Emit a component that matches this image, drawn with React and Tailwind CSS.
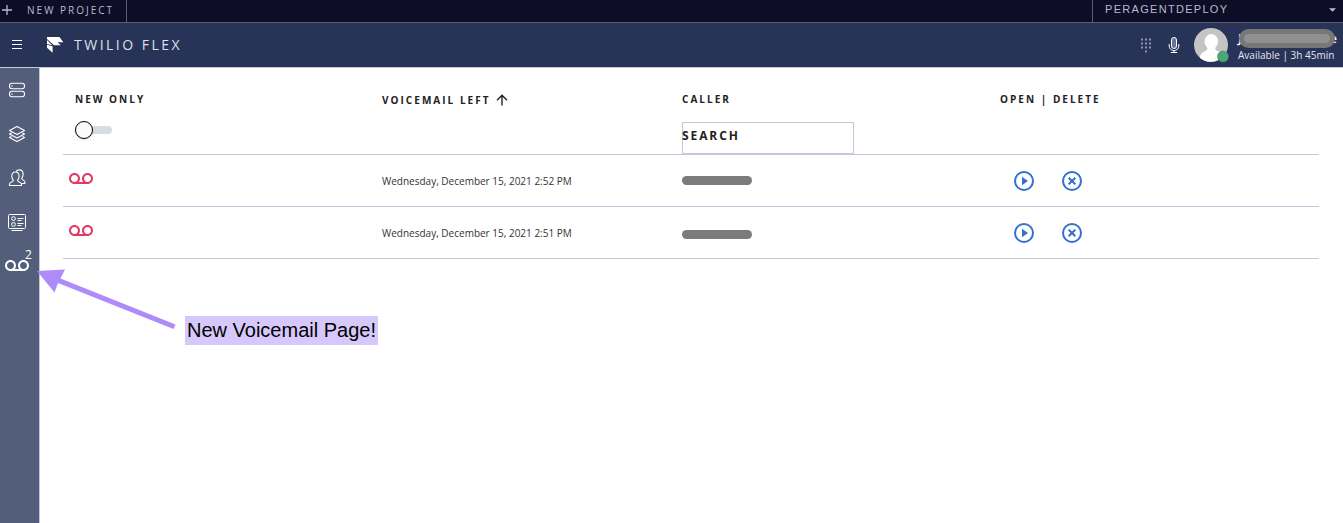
import React from "react";

const VOICEMAIL_PATH =
  "M18.5 6C15.46 6 13 8.46 13 11.5c0 1.33.47 2.55 1.26 3.5H9.74c.79-.95 1.26-2.17 1.26-3.5C11 8.46 8.54 6 5.5 6S0 8.46 0 11.5 2.46 17 5.5 17h13c3.04 0 5.5-2.46 5.5-5.5S21.54 6 18.5 6zm-13 9C3.57 15 2 13.43 2 11.5S3.57 8 5.5 8 9 9.57 9 11.5 7.43 15 5.5 15zm13 0c-1.93 0-3.5-1.57-3.5-3.5S16.57 8 18.5 8 22 9.57 22 11.5 20.43 15 18.5 15z";

function VoicemailIcon({ className }) {
  return (
    <svg viewBox="0 0 24 24" className={`block size-6 ${className}`} fill="currentColor">
      <path d={VOICEMAIL_PATH} />
    </svg>
  );
}

function ProjectBar() {
  return (
    <div className="flex h-[23px] shrink-0 border-b border-[#5e5f6c] bg-[#0e0d28] text-[#b9bac6]">
      <div className="flex w-[127px] items-center border-r border-[#5e5f6c]">
        <svg viewBox="0 0 14 22" className="h-[22px] w-[14px]" stroke="currentColor" strokeWidth="1.3">
          <path d="M2 10h10M7 5v10" />
        </svg>
        <span className="ml-[13px] whitespace-nowrap pb-[2px] text-[10px] leading-none tracking-[2.02px]">NEW PROJECT</span>
      </div>
      <div className="ml-auto flex w-[251px] items-center border-l border-[#5e5f6c] pl-3">
        <span className="pb-[3px] font-['Liberation_Sans',Arial,sans-serif] text-[11px] leading-none tracking-[1.3px]">PERAGENTDEPLOY</span>
        <svg viewBox="0 0 8 4" className="ml-auto mr-[7px] mb-[2px] h-1 w-[7px]" fill="currentColor">
          <path d="M0 0h8L4 4z" />
        </svg>
      </div>
    </div>
  );
}

function Header() {
  return (
    <header className="flex h-[45px] shrink-0 items-center border-b border-[#c6c5dc] bg-[#283358] text-white">
      <svg viewBox="0 0 10 10" className="ml-3 h-[10px] w-[10px]" stroke="currentColor" strokeWidth="1">
        <path d="M0 .5h10M0 4.5h10M0 8.5h10" />
      </svg>
      <svg viewBox="0 0 17 16" className="ml-[25px] h-4 w-[17px]" fill="currentColor">
        <path d="M0 0h12.500L16.300 5.200H10.500L13.800 8.300H7L0 1.900z" />
        <path d="M0 3l5.200 5.200L0 7zM0 7.800l5.600 1.400v6.600L0 10.800z" />
      </svg>
      <span className="ml-[10px] whitespace-nowrap text-[14px] leading-none tracking-[2.500px] text-[#dde0ea]">TWILIO FLEX</span>

      <div className="ml-auto flex items-center">
        <svg viewBox="0 0 12 16" className="mr-[16px] h-4 w-3" fill="#8e95ab">
          <path d="M1 1.400h2v2H1zM5 1.400h2v2H5zM9 1.400h2v2H9zM1 5.400h2v2H1zM5 5.400h2v2H5zM9 5.400h2v2H9zM1 9.400h2v2H1zM5 9.400h2v2H5zM9 9.400h2v2H9zM5 13.400h2v2H5z" />
        </svg>
        <svg viewBox="0 0 12 18" className="mr-[14px] h-[18px] w-3" fill="none" stroke="white">
          <rect x="3.500" y="1.500" width="5" height="11" rx="2.500" fill="#687391" />
          <path d="M1.200 8v2a4.800 4.600 0 0 0 9.600 0V8M6 14.600v2M2.800 16.500h6.400" />
        </svg>
        <svg viewBox="0 0 36 36" className="mr-2 h-9 w-9">
          <circle cx="17" cy="18" r="17" fill="#c4c4c4" />
          <ellipse cx="17.300" cy="14.600" rx="6.800" ry="7.600" fill="white" />
          <path d="M13.500 20h7.600c0 3 1 3.600 4 4.800 2.300 1 3.200 2.200 3.600 4.700A17 17 0 0 1 6 31c.2-3.600 1.200-5.200 3.700-6.200 2.800-1.200 3.800-1.800 3.800-4.800z" fill="white" />
          <circle cx="29" cy="29.500" r="5.500" fill="#4aa973" stroke="#3f7d75" strokeWidth="0.6" />
        </svg>
        <div className="w-[105px]">
          <div className="relative flex h-[19px] items-center justify-between pr-[6px] text-[13px] font-semibold leading-none">
            <span>J</span>
            <span>e</span>
            <div className="absolute left-px top-0 h-[19px] w-[96px] rounded-full border-[5px] border-[#777777] bg-[#909090]" />
          </div>
          <div className="mt-px whitespace-nowrap text-[10px] leading-[13px] tracking-[0.01px] text-[#e6e8ef]">Available | 3h 45min</div>
        </div>
      </div>
    </header>
  );
}

function Sidebar() {
  return (
    <nav className="flex w-10 shrink-0 flex-col border-r border-[#c6c5dc] bg-[#525e7a] pt-[10px] text-white">
      <div className="flex h-11 justify-center pr-[5px]">
        <svg viewBox="0 0 24 24" className="size-6" fill="none" stroke="currentColor" strokeWidth="1.1">
          <rect x="4.500" y="5.200" width="15" height="5.500" rx="2.500" />
          <rect x="4.500" y="13.200" width="15" height="5.500" rx="2.500" />
          <path d="M7 7.500v1.200M7 15.500v1.200" />
        </svg>
      </div>
      <div className="flex h-11 justify-center pr-[5px]">
        <svg viewBox="0 0 24 24" className="size-6" fill="none" stroke="currentColor" strokeWidth="1.1" strokeLinejoin="round">
          <path d="M12 4.500l7.500 4-7.500 4-7.500-4z" />
          <path d="M6.700 10.800l-2.200 1.200 7.500 4 7.500-4-2.200-1.200" />
          <path d="M6.700 14.400l-2.200 1.200 7.500 4 7.500-4-2.200-1.200" />
        </svg>
      </div>
      <div className="flex h-11 justify-center pr-[5px]">
        <svg viewBox="0 0 24 24" className="size-6" fill="none" stroke="currentColor" strokeWidth="1.1" strokeLinejoin="round">
          <path d="M4.500 19.500v-1.600c0-1.700 3.900-1.600 3.900-3.600-1-1-1.600-2.200-1.600-4C6.800 7.600 8.200 6 10.500 6s3.600 1.600 3.600 4.300c0 1.800-.6 3-1.600 4 0 2 4 1.900 4 3.600v1.600z" />
          <path d="M11 5.700c.6-1.200 1.800-1.800 3.400-1.800 2.500 0 3.700 1.700 3.700 4.400 0 1.700-.5 2.900-1.400 3.800 0 2 3.200 2 3.200 3.900v1.500h-3.300" />
        </svg>
      </div>
      <div className="flex h-11 justify-center pr-[5px]">
        <svg viewBox="0 0 24 24" className="size-6" fill="none" stroke="currentColor">
          <rect x="3.500" y="4.500" width="17" height="14" rx="1" />
          <circle cx="8.500" cy="8.600" r="1.900" />
          <circle cx="8.500" cy="14.400" r="1.900" />
          <path d="M12.500 8.500h6M12.500 10.500h4M12.500 13.500h6M12.500 15.500h4M6.500 20.500h11" />
        </svg>
      </div>
      <div className="relative pl-[5px]">
        <VoicemailIcon className="text-white" />
        <span className="absolute left-[25px] top-[-6px] text-[12px] leading-[14px]">2</span>
      </div>
    </nav>
  );
}

const MESSAGES = [
  { left: "Wednesday, December 15, 2021 2:52 PM", offset: "mt-[-1px]" },
  { left: "Wednesday, December 15, 2021 2:51 PM", offset: "mt-[3px]" },
];

function MessageRow({ message }) {
  return (
    <div className="grid h-[52px] grid-cols-[307px_300px_320px_1fr] items-center border-b border-[#c6c5dc] pl-3">
      <VoicemailIcon className="-ml-[6px] -mt-1 text-[#e23a62]" />
      <div className="whitespace-nowrap text-[10px] leading-none text-[#333333]">{message.left}</div>
      <div className={`h-[9px] w-[70px] rounded-full bg-[#7b7b7b] ${message.offset}`} />
      <div className="flex gap-6 pl-[10px] pt-px text-[#3370cf]">
        <svg viewBox="0 0 24 24" className="size-6" fill="none" stroke="currentColor" strokeWidth="2">
          <circle cx="12" cy="12" r="9" />
          <path d="M10 7.800v8.400l6-4.200z" fill="currentColor" stroke="none" />
        </svg>
        <svg viewBox="0 0 24 24" className="size-6" fill="none" stroke="currentColor" strokeWidth="2">
          <circle cx="12" cy="12" r="9" />
          <path d="M8.700 8.700l6.600 6.600M15.300 8.700l-6.600 6.600" />
        </svg>
      </div>
    </div>
  );
}

function VoicemailTable() {
  return (
    <section className="text-[#222222]">
      <div className="grid h-[87px] grid-cols-[307px_300px_318px_1fr] border-b border-[#c6c5dc] pl-3 pt-[25px] text-[10px] font-bold leading-[12px] tracking-[2.030px]">
        <div>
          <div>NEW ONLY</div>
          <div className="mt-[16px] flex items-center">
            <div className="z-10 size-[18px] rounded-full border-[1.500px] border-black bg-[#fafafa] shadow-sm" />
            <div className="-ml-2 h-2 w-[27px] rounded-full bg-[#d8dce3]" />
          </div>
        </div>
        <div className="flex h-[14px] items-center">
          <span className="whitespace-nowrap">VOICEMAIL LEFT</span>
          <svg viewBox="0 0 12 12" className="ml-[5px] size-3" fill="none" stroke="currentColor" strokeWidth="1.400">
            <path d="M6 11.500V1.500M1 6.300l5-5 5 5" />
          </svg>
        </div>
        <div>
          <div>CALLER</div>
          <div className="mt-[17px] h-[32px] w-[172px] border border-[#c6c5dc] text-[12px] leading-[26px] tracking-[1.900px]">
            <span className="-ml-px">SEARCH</span>
          </div>
        </div>
        <div className="whitespace-nowrap">OPEN | DELETE</div>
      </div>
      {MESSAGES.map((message) => (
        <MessageRow key={message.left} message={message} />
      ))}
    </section>
  );
}

function Callout() {
  return (
    <div className="relative -ml-[26px] mt-[9px] flex items-start">
      <svg viewBox="0 0 140 62" className="h-[62px] w-[140px]">
        <path d="M0 3L28 1.500L23.500 10.500L138.500 56.500L136.500 61L21 15L17.500 24.500z" fill="#ae8bf9" />
      </svg>
      <div className="ml-[8px] mt-[48px] h-[29px] w-[193px] whitespace-nowrap bg-[#d7c8fb] pl-[2px] font-['Liberation_Sans',Arial,sans-serif] text-[20px] leading-[28px] text-black">
        New Voicemail Page!
      </div>
    </div>
  );
}

export default function App() {
  return (
    <div className="flex h-[523px] w-[1343px] flex-col overflow-hidden bg-white font-['Open_Sans',sans-serif]">
      <ProjectBar />
      <Header />
      <div className="flex min-h-0 flex-1">
        <Sidebar />
        <main className="min-w-0 flex-1 pl-[23px] pr-6">
          <VoicemailTable />
          <Callout />
        </main>
      </div>
    </div>
  );
}
